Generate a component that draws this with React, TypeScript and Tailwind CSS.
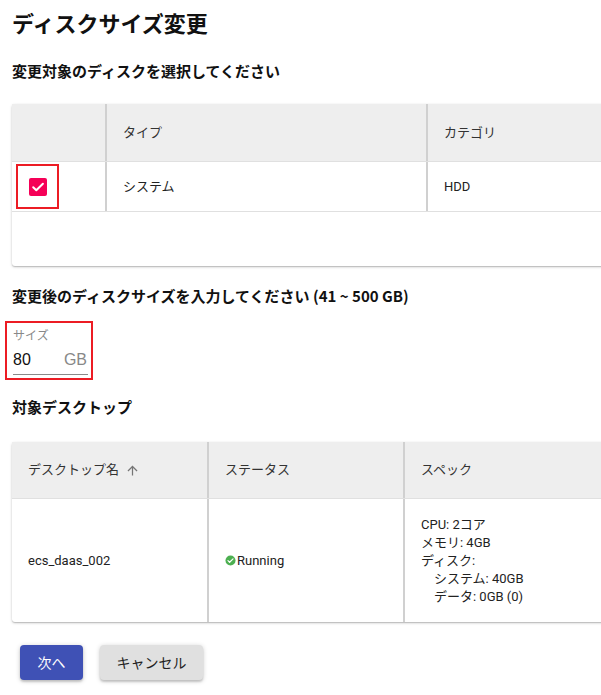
import React from "react";

const font = {
  fontFamily: '"Noto Sans CJK JP", "Noto Sans", sans-serif',
};

const tableFont = { fontFamily: 'Roboto, "Noto Sans CJK JP", sans-serif' };

const CheckIcon = () => (
  <svg viewBox="0 0 18 18" className="h-[18px] w-[18px]">
    <rect x="0" y="0" width="18" height="18" rx="2" fill="#f50057" />
    <path
      d="M4.2 9.2l3.1 3.1 6.6-6.6"
      fill="none"
      stroke="#fff"
      strokeWidth="2"
      strokeLinecap="round"
      strokeLinejoin="round"
    />
  </svg>
);

const StatusIcon = () => (
  <svg viewBox="0 0 24 24" className="h-[11px] w-[11px] shrink-0">
    <circle cx="12" cy="12" r="11" fill="#4caf50" />
    <path
      d="M6.5 12.3l3.6 3.6 7.4-7.4"
      fill="none"
      stroke="#fff"
      strokeWidth="2.6"
      strokeLinecap="round"
      strokeLinejoin="round"
    />
  </svg>
);

const ArrowUp = () => (
  <svg viewBox="0 0 24 24" className="ml-[6px] h-[15px] w-[15px]">
    <path d="M4 12l1.41 1.41L11 7.83V20h2V7.83l5.58 5.59L20 12l-8-8-8 8z" fill="#757575" />
  </svg>
);

export default function App() {
  return (
    <div
      className="h-[695px] w-[601px] overflow-hidden bg-white text-[#222]"
      style={font}
    >
      <h1 className="ml-[12px] pt-[6px] text-[22px] font-bold leading-[32px] text-[#111]">
        ディスクサイズ変更
      </h1>

      <h2 className="ml-[12px] mt-[21px] text-[15px] font-bold leading-[24px] text-[#111]">
        変更対象のディスクを選択してください
      </h2>

      <div className="ml-[12px] mt-[21px] w-[700px] rounded-[3px] bg-white shadow-[0_1px_3px_rgba(0,0,0,0.2),0_1px_1px_rgba(0,0,0,0.14)]">
        <div className="flex h-[57px] bg-[#eeeeee] text-[13px] text-[#333]" style={tableFont}>
          <div className="w-[95px] border-r-2 border-[#d0d0d0]" />
          <div className="flex w-[321px] items-center border-r-2 border-[#d0d0d0] pl-[16px]">
            タイプ
          </div>
          <div className="flex flex-1 items-center pl-[16px]">カテゴリ</div>
        </div>
        <div className="flex h-[51px] border-t border-b border-[#e0e0e0] text-[13px]" style={tableFont}>
          <div className="flex w-[95px] items-center border-r-2 border-[#d0d0d0] pl-[4px]">
            <div className="flex h-[45px] w-[43px] items-center justify-center border-2 border-[#ec1c24]">
              <CheckIcon />
            </div>
          </div>
          <div className="flex w-[321px] items-center border-r-2 border-[#d0d0d0] pl-[16px]">
            システム
          </div>
          <div className="flex flex-1 items-center pl-[16px]">HDD</div>
        </div>
        <div className="h-[54px]" />
      </div>

      <h2 className="ml-[12px] mt-[18px] text-[15px] font-bold leading-[24px] text-[#111]">
        変更後のディスクサイズを入力してください (41 ~ 500 GB)
      </h2>

      <div className="ml-[5px] mt-[13px] h-[59px] w-[88px] border-2 border-[#ec1c24] pl-[6px] pr-[3px] pt-[5px]">
        <div className="text-[12px] leading-[14px] text-[#888]">サイズ</div>
        <div className="mt-[8px] flex items-center justify-between border-b border-[#8a8a8a] pb-[4px] pr-[1px] text-[16px] leading-[20px]" style={{ fontFamily: '"Liberation Sans", Arial, sans-serif' }}>
          <span className="text-[#111]">80</span>
          <span className="text-[#888]">GB</span>
        </div>
      </div>

      <h2 className="ml-[12px] mt-[15px] text-[15px] font-bold leading-[24px] text-[#111]">
        対象デスクトップ
      </h2>

      <div className="ml-[12px] mt-[23px] w-[700px] rounded-[3px] bg-white shadow-[0_1px_3px_rgba(0,0,0,0.2),0_1px_1px_rgba(0,0,0,0.14)]" style={tableFont}>
        <div className="flex h-[57px] border-b border-[#e0e0e0] bg-[#eeeeee] text-[13px] text-[#333]">
          <div className="flex w-[197px] items-center border-r-2 border-[#d0d0d0] pl-[16px]">
            デスクトップ名
            <ArrowUp />
          </div>
          <div className="flex w-[196px] items-center border-r-2 border-[#d0d0d0] pl-[16px]">
            ステータス
          </div>
          <div className="flex flex-1 items-center pl-[16px]">スペック</div>
        </div>
        <div className="flex h-[123px] text-[13px]">
          <div className="flex w-[197px] items-center border-r-2 border-[#d0d0d0] pl-[16px]">
            ecs_daas_002
          </div>
          <div className="flex w-[196px] items-center border-r-2 border-[#d0d0d0] pl-[16px]">
            <StatusIcon />
            <span className="ml-[1px]">Running</span>
          </div>
          <div className="flex flex-1 flex-col justify-center pl-[16px] leading-[18px]">
            <div>CPU: 2コア</div>
            <div>メモリ: 4GB</div>
            <div>ディスク:</div>
            <div className="pl-[13px]">システム: 40GB</div>
            <div className="pl-[13px]">データ: 0GB (0)</div>
          </div>
        </div>
      </div>

      <div className="ml-[20px] mt-[23px] flex gap-[17px]">
        <button className="h-[35px] w-[63px] rounded-[4px] bg-[#3f51b5] text-[14px] text-white shadow-[0_1px_5px_rgba(0,0,0,0.2),0_2px_2px_rgba(0,0,0,0.14)]">
          次へ
        </button>
        <button className="h-[35px] w-[103px] rounded-[4px] bg-[#e0e0e0] text-[14px] text-[#222] shadow-[0_1px_5px_rgba(0,0,0,0.2),0_2px_2px_rgba(0,0,0,0.14)]">
          キャンセル
        </button>
      </div>
    </div>
  );
}
